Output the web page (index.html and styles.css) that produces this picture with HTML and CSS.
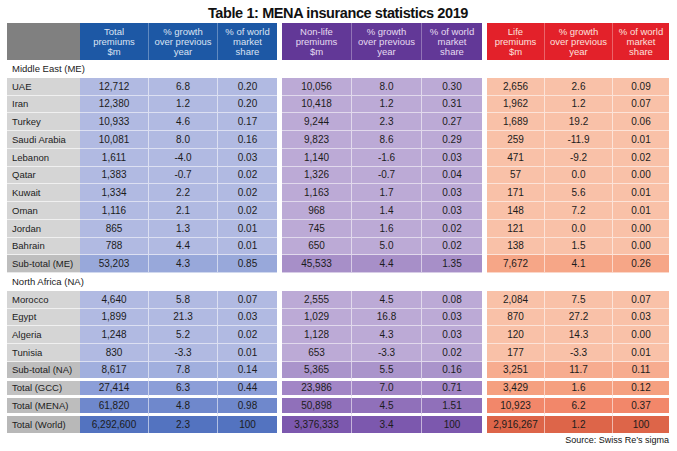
FILE: index.html
```html
<!DOCTYPE html>
<html>
<head>
<meta charset="utf-8">
<link rel="stylesheet" href="styles.css">
</head>
<body>
<div class="page">
  <h1 class="title">Table 1: MENA insurance statistics 2019</h1>
  <div class="table">
    <div class="row head">
      <div class="lab"></div>
      <div class="grp blue">
        <div class="c">Total<br>premiums<br>$m</div>
        <div class="c">% growth<br>over previous<br>year</div>
        <div class="c">% of world<br>market<br>share</div>
      </div>
      <div class="grp purple">
        <div class="c">Non-life<br>premiums<br>$m</div>
        <div class="c">% growth<br>over previous<br>year</div>
        <div class="c">% of world<br>market<br>share</div>
      </div>
      <div class="grp red">
        <div class="c">Life<br>premiums<br>$m</div>
        <div class="c">% growth<br>over previous<br>year</div>
        <div class="c">% of world<br>market<br>share</div>
      </div>
    </div>

    <div class="section">Middle East (ME)</div>

    <div class="row"><div class="lab">UAE</div>
      <div class="grp blue"><div class="c">12,712</div><div class="c">6.8</div><div class="c">0.20</div></div>
      <div class="grp purple"><div class="c">10,056</div><div class="c">8.0</div><div class="c">0.30</div></div>
      <div class="grp red"><div class="c">2,656</div><div class="c">2.6</div><div class="c">0.09</div></div>
    </div>
    <div class="row"><div class="lab">Iran</div>
      <div class="grp blue"><div class="c">12,380</div><div class="c">1.2</div><div class="c">0.20</div></div>
      <div class="grp purple"><div class="c">10,418</div><div class="c">1.2</div><div class="c">0.31</div></div>
      <div class="grp red"><div class="c">1,962</div><div class="c">1.2</div><div class="c">0.07</div></div>
    </div>
    <div class="row"><div class="lab">Turkey</div>
      <div class="grp blue"><div class="c">10,933</div><div class="c">4.6</div><div class="c">0.17</div></div>
      <div class="grp purple"><div class="c">9,244</div><div class="c">2.3</div><div class="c">0.27</div></div>
      <div class="grp red"><div class="c">1,689</div><div class="c">19.2</div><div class="c">0.06</div></div>
    </div>
    <div class="row"><div class="lab">Saudi Arabia</div>
      <div class="grp blue"><div class="c">10,081</div><div class="c">8.0</div><div class="c">0.16</div></div>
      <div class="grp purple"><div class="c">9,823</div><div class="c">8.6</div><div class="c">0.29</div></div>
      <div class="grp red"><div class="c">259</div><div class="c">-11.9</div><div class="c">0.01</div></div>
    </div>
    <div class="row"><div class="lab">Lebanon</div>
      <div class="grp blue"><div class="c">1,611</div><div class="c">-4.0</div><div class="c">0.03</div></div>
      <div class="grp purple"><div class="c">1,140</div><div class="c">-1.6</div><div class="c">0.03</div></div>
      <div class="grp red"><div class="c">471</div><div class="c">-9.2</div><div class="c">0.02</div></div>
    </div>
    <div class="row"><div class="lab">Qatar</div>
      <div class="grp blue"><div class="c">1,383</div><div class="c">-0.7</div><div class="c">0.02</div></div>
      <div class="grp purple"><div class="c">1,326</div><div class="c">-0.7</div><div class="c">0.04</div></div>
      <div class="grp red"><div class="c">57</div><div class="c">0.0</div><div class="c">0.00</div></div>
    </div>
    <div class="row"><div class="lab">Kuwait</div>
      <div class="grp blue"><div class="c">1,334</div><div class="c">2.2</div><div class="c">0.02</div></div>
      <div class="grp purple"><div class="c">1,163</div><div class="c">1.7</div><div class="c">0.03</div></div>
      <div class="grp red"><div class="c">171</div><div class="c">5.6</div><div class="c">0.01</div></div>
    </div>
    <div class="row"><div class="lab">Oman</div>
      <div class="grp blue"><div class="c">1,116</div><div class="c">2.1</div><div class="c">0.02</div></div>
      <div class="grp purple"><div class="c">968</div><div class="c">1.4</div><div class="c">0.03</div></div>
      <div class="grp red"><div class="c">148</div><div class="c">7.2</div><div class="c">0.01</div></div>
    </div>
    <div class="row"><div class="lab">Jordan</div>
      <div class="grp blue"><div class="c">865</div><div class="c">1.3</div><div class="c">0.01</div></div>
      <div class="grp purple"><div class="c">745</div><div class="c">1.6</div><div class="c">0.02</div></div>
      <div class="grp red"><div class="c">121</div><div class="c">0.0</div><div class="c">0.00</div></div>
    </div>
    <div class="row"><div class="lab">Bahrain</div>
      <div class="grp blue"><div class="c">788</div><div class="c">4.4</div><div class="c">0.01</div></div>
      <div class="grp purple"><div class="c">650</div><div class="c">5.0</div><div class="c">0.02</div></div>
      <div class="grp red"><div class="c">138</div><div class="c">1.5</div><div class="c">0.00</div></div>
    </div>
    <div class="row sub"><div class="lab">Sub-total (ME)</div>
      <div class="grp blue"><div class="c">53,203</div><div class="c">4.3</div><div class="c">0.85</div></div>
      <div class="grp purple"><div class="c">45,533</div><div class="c">4.4</div><div class="c">1.35</div></div>
      <div class="grp red"><div class="c">7,672</div><div class="c">4.1</div><div class="c">0.26</div></div>
    </div>

    <div class="section">North Africa (NA)</div>

    <div class="row"><div class="lab">Morocco</div>
      <div class="grp blue"><div class="c">4,640</div><div class="c">5.8</div><div class="c">0.07</div></div>
      <div class="grp purple"><div class="c">2,555</div><div class="c">4.5</div><div class="c">0.08</div></div>
      <div class="grp red"><div class="c">2,084</div><div class="c">7.5</div><div class="c">0.07</div></div>
    </div>
    <div class="row"><div class="lab">Egypt</div>
      <div class="grp blue"><div class="c">1,899</div><div class="c">21.3</div><div class="c">0.03</div></div>
      <div class="grp purple"><div class="c">1,029</div><div class="c">16.8</div><div class="c">0.03</div></div>
      <div class="grp red"><div class="c">870</div><div class="c">27.2</div><div class="c">0.03</div></div>
    </div>
    <div class="row"><div class="lab">Algeria</div>
      <div class="grp blue"><div class="c">1,248</div><div class="c">5.2</div><div class="c">0.02</div></div>
      <div class="grp purple"><div class="c">1,128</div><div class="c">4.3</div><div class="c">0.03</div></div>
      <div class="grp red"><div class="c">120</div><div class="c">14.3</div><div class="c">0.00</div></div>
    </div>
    <div class="row"><div class="lab">Tunisia</div>
      <div class="grp blue"><div class="c">830</div><div class="c">-3.3</div><div class="c">0.01</div></div>
      <div class="grp purple"><div class="c">653</div><div class="c">-3.3</div><div class="c">0.02</div></div>
      <div class="grp red"><div class="c">177</div><div class="c">-3.3</div><div class="c">0.01</div></div>
    </div>
    <div class="row sub subna"><div class="lab">Sub-total (NA)</div>
      <div class="grp blue"><div class="c">8,617</div><div class="c">7.8</div><div class="c">0.14</div></div>
      <div class="grp purple"><div class="c">5,365</div><div class="c">5.5</div><div class="c">0.16</div></div>
      <div class="grp red"><div class="c">3,251</div><div class="c">11.7</div><div class="c">0.11</div></div>
    </div>
    <div class="row total gcc"><div class="lab">Total (GCC)</div>
      <div class="grp blue"><div class="c">27,414</div><div class="c">6.3</div><div class="c">0.44</div></div>
      <div class="grp purple"><div class="c">23,986</div><div class="c">7.0</div><div class="c">0.71</div></div>
      <div class="grp red"><div class="c">3,429</div><div class="c">1.6</div><div class="c">0.12</div></div>
    </div>
    <div class="row total mena"><div class="lab">Total (MENA)</div>
      <div class="grp blue"><div class="c">61,820</div><div class="c">4.8</div><div class="c">0.98</div></div>
      <div class="grp purple"><div class="c">50,898</div><div class="c">4.5</div><div class="c">1.51</div></div>
      <div class="grp red"><div class="c">10,923</div><div class="c">6.2</div><div class="c">0.37</div></div>
    </div>
    <div class="row total world"><div class="lab">Total (World)</div>
      <div class="grp blue"><div class="c">6,292,600</div><div class="c">2.3</div><div class="c">100</div></div>
      <div class="grp purple"><div class="c">3,376,333</div><div class="c">3.4</div><div class="c">100</div></div>
      <div class="grp red"><div class="c">2,916,267</div><div class="c">1.2</div><div class="c">100</div></div>
    </div>
  </div>
  <div class="source">Source: Swiss Re’s sigma</div>
</div>
</body>
</html>
```

FILE: styles.css
```css
* { box-sizing: border-box; }

body {
  margin: 0;
  background: #ffffff;
  font-family: "Liberation Sans", Arial, sans-serif;
  color: #1c1c1c;
}

.page {
  width: 677px;
  padding-left: 7px;
}

.title {
  margin: 0 0 2px 0;
  padding-top: 5px;
  width: 662px;
  text-align: center;
  font-size: 14.5px;
  line-height: 16px;
  font-weight: bold;
  letter-spacing: -0.4px;
  color: #111111;
}

.table {
  width: 662px;
}

.row {
  display: flex;
  height: 17.75px;
}

.lab {
  width: 73px;
  flex: none;
  background: #d5d5d5;
  font-size: 9.5px;
  padding-left: 5px;
  display: flex;
  align-items: center;
  border-bottom: 1px solid rgba(255,255,255,0.65);
}

.grp {
  display: grid;
  flex: none;
}

.grp.blue { width: 197px; grid-template-columns: 68px 69px 60px; background: #b1bae2; }
.grp.purple { width: 200px; grid-template-columns: 69px 70px 61px; background: #bcaad6; margin-left: 5px; }
.grp.red { width: 182px; grid-template-columns: 57px 68px 57px; background: #f9c1a8; margin-left: 5px; }

.c {
  display: flex;
  align-items: center;
  justify-content: center;
  text-align: center;
  font-size: 10px;
  border-bottom: 1px solid rgba(255,255,255,0.55);
  border-left: 1px solid rgba(255,255,255,0.55);
}

.c:first-child { border-left: none; }

/* header */
.row.head { height: 37px; }
.head .lab { background: #808080; border-bottom: none; }
.head .grp.blue { background: #1d58a5; }
.head .grp.purple { background: #623897; }
.head .grp.red { background: #e3212a; }
.head .c {
  font-size: 9.5px;
  line-height: 10px;
  border-bottom: none;
  border-left: 1px solid rgba(255,255,255,0.3);
}
.head .c:first-child { border-left: none; }
.head .blue .c { color: #dbe3f3; }
.head .purple .c { color: #e6dcf1; }
.head .red .c { color: #fbe0de; }

.section {
  height: 17.75px;
  display: flex;
  align-items: center;
  padding-left: 5px;
  font-size: 9.5px;
  color: #1a1a1a;
}

/* sub-totals */
.sub .lab { background: #bebebe; }
.sub .grp.blue { background: #98a8da; }
.sub .grp.purple { background: #a78fc8; }
.sub .grp.red { background: #f6a687; }

.subna .lab,
.subna .c { border-bottom: 2px solid #ffffff; }
.subna .grp.blue { background: #a1afde; }
.subna .grp.purple { background: #aa94cb; }
.subna .grp.red { background: #f7ac8f; }

/* totals */
.total .lab,
.total .c {
  border-top: 1px solid #ffffff;
  border-bottom: 2px solid #ffffff;
}
.total.world .lab,
.total.world .c { border-bottom: none; }

.total .lab { background: #c2c2c2; }
.gcc .grp.blue { background: #8c9ed8; }
.gcc .grp.purple { background: #a286c6; }
.gcc .grp.red { background: #f5a080; }

.mena .lab { background: #bdbdbd; }
.mena .grp.blue { background: #6f88cc; }
.mena .grp.purple { background: #9070ba; }
.mena .grp.red { background: #f2876a; }

.world .lab { background: #b8b8b8; }
.world .grp.blue { background: #5373c0; }
.world .grp.purple { background: #7c58ae; }
.world .grp.red { background: #dd6549; }

.source {
  width: 662px;
  margin-top: 2px;
  text-align: right;
  font-size: 9px;
  line-height: 11px;
  color: #111111;
}
```
